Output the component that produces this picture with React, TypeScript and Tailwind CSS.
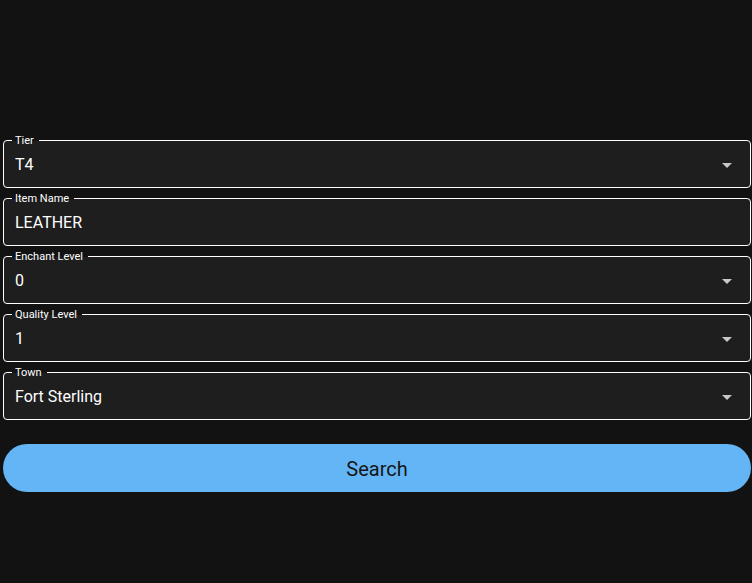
import { useState } from 'react'

type Field = { label: string; value: string; select?: boolean }

const fields: Field[] = [
  { label: 'Tier', value: 'T4', select: true },
  { label: 'Item Name', value: 'LEATHER' },
  { label: 'Enchant Level', value: '0', select: true },
  { label: 'Quality Level', value: '1', select: true },
  { label: 'Town', value: 'Fort Sterling', select: true },
]

function ArrowDrop() {
  return (
    <svg viewBox="0 0 24 24" className="h-6 w-6 fill-[#c8c8c8]">
      <path d="M7 10l5 5 5-5z" />
    </svg>
  )
}

function OutlinedField({ label, value, select }: Field) {
  return (
    <div className="relative h-12 rounded-[4px] border border-white bg-[#1e1e1e]">
      <span className="absolute left-[8px] top-[-8px] pl-[3px] pr-[5px] text-[11px] leading-[15px] text-white bg-[linear-gradient(to_bottom,#121212_53%,#1e1e1e_53%)]">
        {label}
      </span>
      <div className="flex h-full items-center justify-between pl-[11px] pr-[11px] pt-[1px]">
        <span className="text-[16px] text-white">{value}</span>
        {select && <ArrowDrop />}
      </div>
    </div>
  )
}

export default function App() {
  const [clicked, setClicked] = useState(0)

  return (
    <div className="min-h-[583px] bg-[#121212] pt-[140px] pl-[3px] pr-[1px] font-['Roboto','Liberation_Sans',sans-serif]">
      <div className="flex flex-col gap-[10px]">
        {fields.map((f) => (
          <OutlinedField key={f.label} {...f} />
        ))}
      </div>
      <button
        onClick={() => setClicked(clicked + 1)}
        className="mt-6 h-12 w-full rounded-full bg-[#64b5f6] pt-[2px] text-[20px] text-[#151515]"
      >
        Search
      </button>
    </div>
  )
}
